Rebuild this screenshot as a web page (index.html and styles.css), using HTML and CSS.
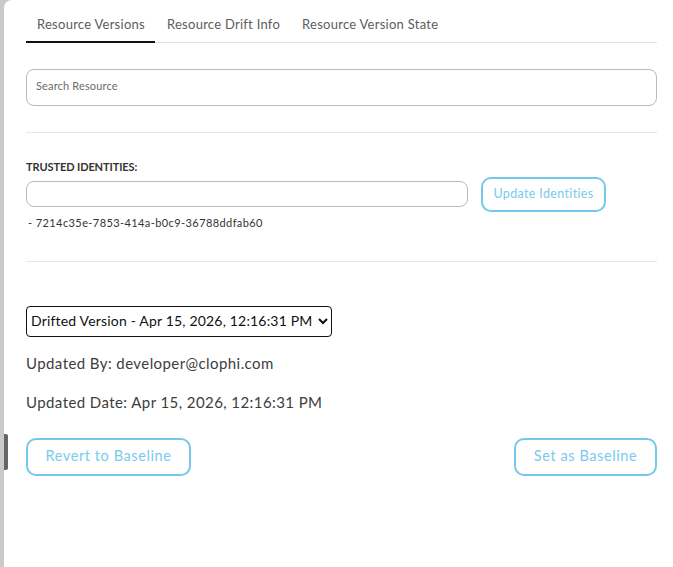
FILE: index.html
```html
<!DOCTYPE html>
<html lang="en">
<head>
    <meta charset="UTF-8">
    <meta name="viewport" content="width=device-width, initial-scale=1.0">
    <title>Resource Versions</title>
    <link rel="stylesheet" href="styles.css">
</head>
<body>
    <div class="drawer-handle"></div>

    <main class="panel">
        <!-- tabs -->
        <nav class="tabs">
            <a class="tab active">Resource Versions</a>
            <a class="tab">Resource Drift Info</a>
            <a class="tab">Resource Version State</a>
        </nav>

        <!-- search -->
        <section class="search-section">
            <input class="search-input" type="text" placeholder="Search Resource">
        </section>

        <!-- trusted identities -->
        <section class="identities-section">
            <h4 class="identities-label">TRUSTED IDENTITIES:</h4>
            <div class="identities-row">
                <input class="identities-input" type="text">
                <button class="outline-button small">Update Identities</button>
            </div>
            <p class="identity-item">- 7214c35e-7853-414a-b0c9-36788ddfab60</p>
        </section>

        <!-- version details -->
        <section class="version-section">
            <select class="version-select">
                <option>Drifted Version - Apr 15, 2026, 12:16:31 PM</option>
            </select>
            <p class="version-meta">Updated By: developer@clophi.com</p>
            <p class="version-meta">Updated Date: Apr 15, 2026, 12:16:31 PM</p>
            <div class="version-actions">
                <button class="outline-button">Revert to Baseline</button>
                <button class="outline-button">Set as Baseline</button>
            </div>
        </section>
    </main>
</body>
</html>
```

FILE: styles.css
```css
* {
    margin: 0;
    padding: 0;
    box-sizing: border-box;
}

body {
    font-family: Lato, "Open Sans", sans-serif;
    background-color: #c9cacd;
    color: #333;
    height: 567px;
    padding-left: 4px;
    overflow: hidden;
}

.panel {
    background-color: #fff;
    height: 567px;
    width: 669px;
    padding: 0 16px 0 22px;
    border-top-left-radius: 8px;
}

/* the little grip on the edge of the drawer */
.drawer-handle {
    position: absolute;
    top: 434px;
    left: 4px;
    width: 4px;
    height: 36px;
    background-color: #666;
    border-radius: 0 2px 2px 0;
}

/* tabs */
.tabs {
    display: flex;
    height: 43px;
    padding-top: 6px;
    border-bottom: 1px solid #e2e2e2;
}

.tab {
    height: 37px;
    padding: 0 11px;
    font-size: 13px;
    line-height: 36px;
    letter-spacing: 0.26px;
    color: #5c5c5c;
}

.tab.active {
    width: 129px;
    padding-right: 0;
    margin-right: 1px;
    border-bottom: 2px solid #111;
}

/* search */
.search-section {
    padding: 26px 0;
    border-bottom: 1px solid #e6e6e6;
}

.search-input {
    display: block;
    width: 100%;
    height: 37px;
    padding: 0 9px 5px;
    border: 1px solid #b9b9b9;
    border-radius: 8px;
    font-family: inherit;
    font-size: 11px;
    letter-spacing: 0.15px;
}

.search-input::placeholder {
    color: #6b6b6b;
    opacity: 1;
}

/* trusted identities */
.identities-section {
    padding-top: 27px;
    height: 129px;
    border-bottom: 1px solid #e6e6e6;
}

.identities-label {
    font-size: 11px;
    line-height: 14px;
    font-weight: 700;
    letter-spacing: -0.1px;
    color: #333;
}

.identities-row {
    display: flex;
    align-items: center;
    gap: 13px;
    height: 35px;
    margin-top: 3px;
}

.identities-input {
    width: 442px;
    height: 26px;
    margin-bottom: 1px;
    border: 1px solid #b9b9b9;
    border-radius: 8px;
}

.identity-item {
    margin-top: 3px;
    padding-left: 2px;
    font-size: 11px;
    line-height: 16px;
    letter-spacing: 0.41px;
    color: #333;
}

/* version details */
.version-section {
    padding-top: 44px;
}

.version-select {
    display: block;
    width: 306px;
    height: 31px;
    padding: 0 0 2px;
    border: 1px solid #111;
    border-radius: 4px;
    background-color: #fff;
    font-family: inherit;
    font-size: 14px;
    letter-spacing: 0.18px;
    color: #111;
}

.version-meta {
    margin-top: 19px;
    font-size: 15px;
    line-height: 20px;
    letter-spacing: 0.42px;
    color: #3d3d3d;
}

.version-select + .version-meta {
    margin-top: 16px;
}

.version-actions {
    display: flex;
    justify-content: space-between;
    margin-top: 26px;
}

.outline-button {
    height: 38px;
    padding: 0 0 3px;
    width: 165px;
    border: 2px solid #74c9ea;
    border-radius: 10px;
    background-color: #fff;
    font-family: inherit;
    font-size: 14.5px;
    letter-spacing: 0.58px;
    color: #79cbeb;
}

.outline-button + .outline-button {
    width: 143px;
}

.outline-button.small {
    width: 125px;
    height: 35px;
    font-size: 12.5px;
    letter-spacing: 0.35px;
}
```
